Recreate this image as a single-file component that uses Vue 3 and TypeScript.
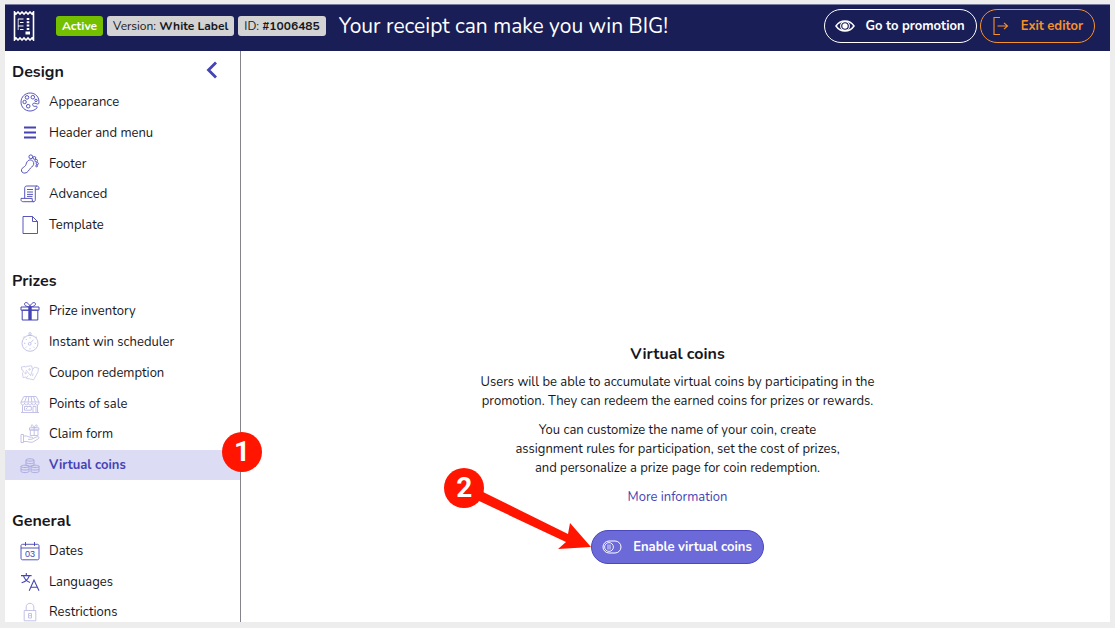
<script setup lang="ts">
interface MenuItem {
  label: string
  strokes: string
  fills?: string
  glyph?: string
  weight?: number
  muted?: boolean
  active?: boolean
}

interface MenuGroup {
  title: string
  key: string
  items: MenuItem[]
}

const circle = (x: number, y: number, r: number): string =>
  `M${x - r} ${y}a${r} ${r} 0 1 0 ${r * 2} 0a${r} ${r} 0 1 0 ${-r * 2} 0z`

const palette =
  'M18.9 11.2C19.6 5.2 15.6 1 10.2 1C5 1 1 5 1 10.1C1 15.1 5 19 10 19C12.8 19 15.3 17.8 17 15.8C17.7 14.8 16.9 14.1 15.9 14.3C14.3 14.6 12.7 14.1 12.6 12.7C12.5 11.5 13.7 10.8 15 11.2C16.6 11.7 18.6 12.6 18.9 11.2z' +
  circle(7, 5.4, 1.8) + circle(12.8, 5.2, 1.8) + circle(4.6, 10, 1.7) + circle(8.2, 14.2, 1.8) + circle(16, 8.4, 1.2)

const foot =
  'M8.2 6.6C10.3 5.1 13.2 6.4 13.7 8.7C14.2 11.4 12.1 12.6 10.5 14.1C8.8 15.8 8.1 18.8 4.9 19.1C2.6 19.3 1 17.6 1.5 15.6C2 13.6 4.3 13.3 5.4 11.7C6.5 10 6.2 8.1 8.2 6.6z' +
  circle(10.8, 2.8, 1.9) + circle(14.4, 3.9, 1.4) + circle(16.2, 6.7, 1.3) + circle(17.3, 9.6, 1.1) + circle(16.6, 12, 0.9)

const scroll =
  'M4.7 14.4V4.2C4.7 2.8 5.5 2 6.8 2H17M15.3 14.4V4.1C15.3 1.4 19 1.4 19 4.1V5.2H15.3M1 14.4H12.2V16C12.2 18.4 15.3 18.2 15.3 15.8V14.2M1 14.4V15.6C1 17 1.9 17.7 3.2 17.7H13.7M7 5.5H13M7 8H13M7 10.4H13M7 12.4H12.5'

const gift =
  'M1 6H19V9.2H1zM2.2 9.2H17.8V19H2.2zM10 5.8C6.8 5.8 4.1 4.6 4.6 2.6C5.2.5 8.9 1.6 10 5.8C11.1 1.6 14.8.5 15.4 2.6C15.9 4.6 13.2 5.8 10 5.8z'

const stopwatch =
  circle(10, 11.3, 8) + circle(10, 1.8, 1.2) + 'M8.3 3.5H11.7M15.6 4.3L17 5.7M4.4 4.3L3 5.7M10 5.2V6.5M10 16.2V17.4M4 11.3H5.3M14.7 11.3H16M5.8 7L6.7 7.9M5.8 15.6L6.7 14.7M14.2 15.6L13.3 14.7M13.5 7.7L10.8 10.6' +
  circle(9.7, 11.8, 1.4)

const coupons =
  'M1.4 4L5 3.4L5.6 4.3L6.4 3.3L11.6 2.8L12.6 6.6M1.4 4L1.9 7C3.6 6.8 4 9.6 2.4 10.2L3.2 14.6L6 14M14.6 4L18.8 5.4C18 6.6 18 7.6 18.2 8.6L13.6 16.8L6.2 15.2L8 12.6M12.6 6.6L14.6 4M6 7L10.6 12.6L12.6 6.6M13 10.4L12.6 13.2' +
  circle(5.6, 10, 0.8) + circle(9.6, 6.4, 0.8)

const store =
  'M3.8 2.5H16.2L19 8H1zM1 8V9C1 11.6 4.6 11.6 4.6 9C4.6 11.6 8.2 11.6 8.2 9C8.2 11.6 11.8 11.6 11.8 9C11.8 11.6 15.4 11.6 15.4 9C15.4 11.6 19 11.6 19 9V8M4.6 8L6.6 2.5M8.2 8L8.8 2.5M11.8 8L11.2 2.5M15.4 8L13.4 2.5M2.5 11V18.5M17.5 11V18.5M1 18.5H19M4.5 12.5H11.3V16.2H4.5zM13 18.5V12.5H16V18.5M6 15L7.5 13.5'

const claim =
  'M9.5 3.8H18.8V6H9.5zM10.3 6H18V11.5H10.3zM14.2 3.8V11.5M14.2 3.6C10.7 3.5 10.4 1 12 1C13 1 13.8 2.2 14.2 3.6C14.6 2.2 15.4 1 16.4 1C18 1 17.7 3.5 14.2 3.6zM1 10.5H3.5V18.5H1zM3.5 12H6.4C8 12 8.7 13.2 10.1 13.2H11.7C13.4 13.2 13.4 15.3 11.7 15.3H8M13.2 14.4L17.2 12.7C18.7 12.1 19.7 13.8 18.4 14.7L13.8 17.6C11.6 18.8 9.5 18.2 7.2 17.5H3.5'

const stack = (x: number, y: number): string =>
  `M${x} ${y}c0-1.6 8-1.6 8 0v5c0 1.6-8 1.6-8 0zM${x} ${y}c0 1.5 8 1.5 8 0M${x} ${y + 2.5}c0 1.5 8 1.5 8 0`

const calendar =
  'M2.5 3.3H17.5C18.4 3.3 19 3.9 19 4.8V17.2C19 18.2 18.4 18.8 17.5 18.8H2.5C1.6 18.8 1 18.2 1 17.2V4.8C1 3.9 1.6 3.3 2.5 3.3zM1 7H19M5.5 1V5M14.5 1V5'

const translate =
  'M1 3.6H11.6M6.3 1V3.6M9.4 3.6C8.2 7.4 5.2 9.8 1.6 10.8M3.4 3.6C4.5 6.9 6.7 9.2 10 10.4M9.2 18.8L14 8L19 18.8M10.8 15.2H17.4'

const lock =
  'M4.2 8.5H15.8V18.8H4.2zM6.2 8.5V5C6.2.1 13.8.1 13.8 5V8.5M8.5 11.5H11.5V16H8.5zM9 13.7H11'

const groups: MenuGroup[] = [
  {
    title: 'Design',
    key: 'design',
    items: [
      { label: 'Appearance', strokes: palette },
      { label: 'Header and menu', strokes: 'M4 4.5H16M4 9.5H16M4 14.5H16', weight: 1.8 },
      { label: 'Footer', strokes: foot },
      { label: 'Advanced', strokes: scroll },
      { label: 'Template', strokes: 'M3 1.5H12.5L17.5 6.5V18.5H3zM12.5 1.5V6.5H17.5' },
    ],
  },
  {
    title: 'Prizes',
    key: 'prizes',
    items: [
      { label: 'Prize inventory', strokes: gift, fills: 'M8.3 6H11.7V19H8.3z', weight: 1 },
      { label: 'Instant win scheduler', strokes: stopwatch, muted: true },
      { label: 'Coupon redemption', strokes: coupons, weight: 0.7, muted: true },
      { label: 'Points of sale', strokes: store, muted: true },
      { label: 'Claim form', strokes: claim, muted: true },
      { label: 'Virtual coins', strokes: stack(6, 5) + stack(1, 11.4) + stack(11, 11.4), muted: true, active: true },
    ],
  },
  {
    title: 'General',
    key: 'general',
    items: [
      { label: 'Dates', strokes: calendar, glyph: '03' },
      { label: 'Languages', strokes: translate, weight: 1.1 },
      { label: 'Restrictions', strokes: lock, muted: true },
    ],
  },
]
</script>

<template>
  <div class="shell">
    <div class="frame">
      <header class="topbar">
        <svg class="logo" viewBox="0 0 22 30" aria-hidden="true">
          <path d="M1.5 1L3 3L5 1L7 3L9 1L11 3L13 1L15 3L17 1L19 3L20.5 1V29L19 27L17 29L15 27L13 29L11 27L9 29L7 27L5 29L3 27L1.5 29z" fill="none" stroke="#fff" stroke-width="1.6" />
          <path d="M5 8H10.5M7 11.5H10.5M5 15H10.5M7 18.5H10.5" stroke="#fff" stroke-width="1.2" />
          <path d="M5.2 8V19" stroke="#fff" stroke-width=".8" />
          <path d="M15 7V19.5" stroke="#fff" stroke-width="2.6" stroke-dasharray="2 1.3" />
          <path d="M12.5 20.5H17V23.5H12.5z" fill="#fff" />
        </svg>
        <div class="tags">
          <span class="tag tag-active">Active</span>
          <span class="tag">Version: <b>White Label</b></span>
          <span class="tag">ID: <b>#1006485</b></span>
        </div>
        <h1>Your receipt can make you win BIG!</h1>
        <div class="actions">
          <button type="button" class="pill">
            <svg viewBox="0 0 20 20" aria-hidden="true">
              <path d="M1 10C5.5 3.4 14.5 3.4 19 10C14.5 16.6 5.5 16.6 1 10z" fill="none" stroke="#fff" stroke-width="1.5" />
              <circle cx="10" cy="10" r="4.4" fill="none" stroke="#fff" stroke-width="1.1" />
              <circle cx="10" cy="10" r="2.7" fill="#fff" />
            </svg>
            Go to promotion
          </button>
          <button type="button" class="pill pill-exit">
            <svg viewBox="0 0 20 20" aria-hidden="true">
              <path d="M9 1.5H3V18.5H9M6.5 10H16.5M13 6.8L16.5 10L13 13.2" fill="none" stroke="currentColor" stroke-width="1.1" />
            </svg>
            Exit editor
          </button>
        </div>
      </header>

      <div class="body">
        <nav class="sidebar" aria-label="Editor sections">
          <button type="button" class="collapse" aria-label="Collapse menu">
            <svg viewBox="0 0 12 18" aria-hidden="true">
              <path d="M10 1.5L2.5 9L10 16.5" fill="none" stroke="currentColor" stroke-width="2.8" />
            </svg>
          </button>
          <section v-for="group in groups" :key="group.key" :class="['group', group.key]">
            <h2>{{ group.title }}</h2>
            <ul>
              <li v-for="item in group.items" :key="item.label" :class="{ active: item.active }">
                <a href="#">
                  <svg :class="['icon', { muted: item.muted }]" viewBox="0 0 20 20" aria-hidden="true">
                    <path :d="item.strokes" fill="none" stroke="currentColor" :stroke-width="item.weight ?? 0.9" />
                    <path v-if="item.fills" :d="item.fills" fill="currentColor" />
                    <text v-if="item.glyph" x="10" y="16" text-anchor="middle" font-size="9">{{ item.glyph }}</text>
                  </svg>
                  <span>{{ item.label }}</span>
                </a>
                <span v-if="item.active" class="marker marker-one">1</span>
              </li>
            </ul>
          </section>
        </nav>

        <main>
          <h2>Virtual coins</h2>
          <p>Users will be able to accumulate virtual coins by participating in the<br />promotion. They can redeem the earned coins for prizes or rewards.</p>
          <p>You can customize the name of your coin, create<br />assignment rules for participation, set the cost of prizes,<br />and personalize a prize page for coin redemption.</p>
          <a class="more" href="#">More information</a>
          <div class="cta">
            <button type="button" class="enable">
              <svg viewBox="0 0 20 20" aria-hidden="true">
                <rect x="1" y="4" width="18" height="12" rx="6" fill="none" stroke="#fff" />
                <circle cx="7" cy="10" r="4.4" fill="none" stroke="#fff" stroke-width=".9" />
                <path d="M6 7.5V12.5M8 7.5V12.5" stroke="#fff" stroke-width=".8" />
              </svg>
              Enable virtual coins
            </button>
            <svg class="arrow" viewBox="0 0 130 70" aria-hidden="true">
              <path d="M20 9L107 52L109 41L130 65L97 67L105 60L16 18z" fill="#ff1500" />
            </svg>
            <span class="marker marker-two">2</span>
          </div>
        </main>
      </div>
    </div>
  </div>
</template>

<style>
body {
  margin: 0;
}
</style>

<style scoped>
* {
  box-sizing: border-box;
}

.shell {
  height: 100vh;
  padding: 4px 5px 6px;
  background: #ededed;
  color: #17171c;
  font-family: Nunito, Lato, "Liberation Sans", sans-serif;
  font-size: 13px;
  line-height: 19px;
}

.frame {
  display: flex;
  flex-direction: column;
  height: 100%;
  overflow: hidden;
  background: #fff;
}

button {
  font: inherit;
  cursor: pointer;
}

.topbar {
  display: flex;
  flex: none;
  align-items: center;
  height: 47px;
  padding: 0 15px 4px 8px;
  border-top: 1px solid #777ca0;
  background: #1a1e56;
  color: #fff;
}

.logo {
  width: 22px;
  height: 30px;
  margin-right: 21px;
}

.tags {
  display: flex;
  gap: 4px;
  margin-right: 13px;
}

.tag {
  height: 20px;
  padding: 0 6px;
  border-radius: 3px;
  background: #d3d3d3;
  color: #17171c;
  font-size: 12px;
  line-height: 20px;
  white-space: nowrap;
}

.tag-active {
  background: #74c000;
  color: #fff;
  font-weight: 700;
}

h1 {
  margin: 0;
  font-size: 21px;
  font-weight: 400;
  line-height: 30px;
  white-space: nowrap;
}

.actions {
  display: flex;
  gap: 3px;
  margin-left: auto;
}

.pill,
.enable {
  display: flex;
  align-items: center;
  gap: 10px;
  height: 34px;
  padding: 0 11px 0 10px;
  border: 1px solid #fff;
  border-radius: 17px;
  background: transparent;
  color: #fff;
  font-weight: 700;
  white-space: nowrap;
}

.pill svg,
.enable svg {
  width: 20px;
  height: 20px;
}

.pill-exit {
  border-color: #f7922b;
  color: #f7922b;
}

.body {
  display: flex;
  flex: 1;
  min-height: 0;
}

.sidebar {
  position: relative;
  flex: none;
  width: 236px;
  padding-top: 6px;
  border-right: 1px solid #84848a;
}

.collapse {
  position: absolute;
  top: 10px;
  right: 22px;
  width: 12px;
  height: 18px;
  padding: 0;
  border: 0;
  background: none;
  color: #4543b5;
}

.collapse svg {
  display: block;
  width: 12px;
  height: 18px;
}

.group {
  margin-bottom: 25px;
}

.group h2 {
  margin: 0;
  padding-left: 7px;
  font-size: 16px;
  font-weight: 700;
  line-height: 30px;
}

ul {
  display: grid;
  grid-auto-rows: 1fr;
  margin: 0;
  padding: 0;
  list-style: none;
}

.design ul {
  height: 154px;
}

.prizes ul {
  height: 185px;
}

.general ul {
  height: 92px;
}

li {
  position: relative;
}

li a {
  display: flex;
  align-items: center;
  gap: 9px;
  height: 30px;
  padding-left: 15px;
  color: inherit;
  line-height: 20px;
  text-decoration: none;
}

.active a {
  background: #dcdcf5;
  color: #4543b5;
  font-weight: 700;
}

.icon {
  width: 20px;
  height: 20px;
  color: #4543b5;
}

.icon text {
  fill: currentColor;
  font-family: "Liberation Sans", sans-serif;
}

.muted {
  opacity: 0.35;
}

.marker {
  position: absolute;
  width: 40px;
  height: 40px;
  border-radius: 50%;
  background: #ff1500;
  color: #fff;
  font: 700 28px/40px Roboto, "Liberation Sans", sans-serif;
  text-align: center;
}

.marker-one {
  top: -18px;
  right: -22px;
}

main {
  display: flex;
  flex: 1;
  flex-direction: column;
  align-items: center;
  padding: 293px 0 0 4px;
  text-align: center;
}

main h2 {
  margin: 0 0 9px;
  font-size: 16px;
  font-weight: 700;
  line-height: 20px;
}

main p {
  margin: 0 0 10px;
}

.more {
  color: #4543b5;
  text-decoration: none;
}

.cta {
  position: relative;
  margin-top: 23px;
}

.enable {
  gap: 11px;
  border-color: #4b49bd;
  background: #6c6ad8;
}

.marker-two {
  top: -62px;
  left: -147px;
}

.arrow {
  position: absolute;
  top: -48px;
  left: -130px;
  width: 130px;
  height: 70px;
  overflow: visible;
}
</style>
